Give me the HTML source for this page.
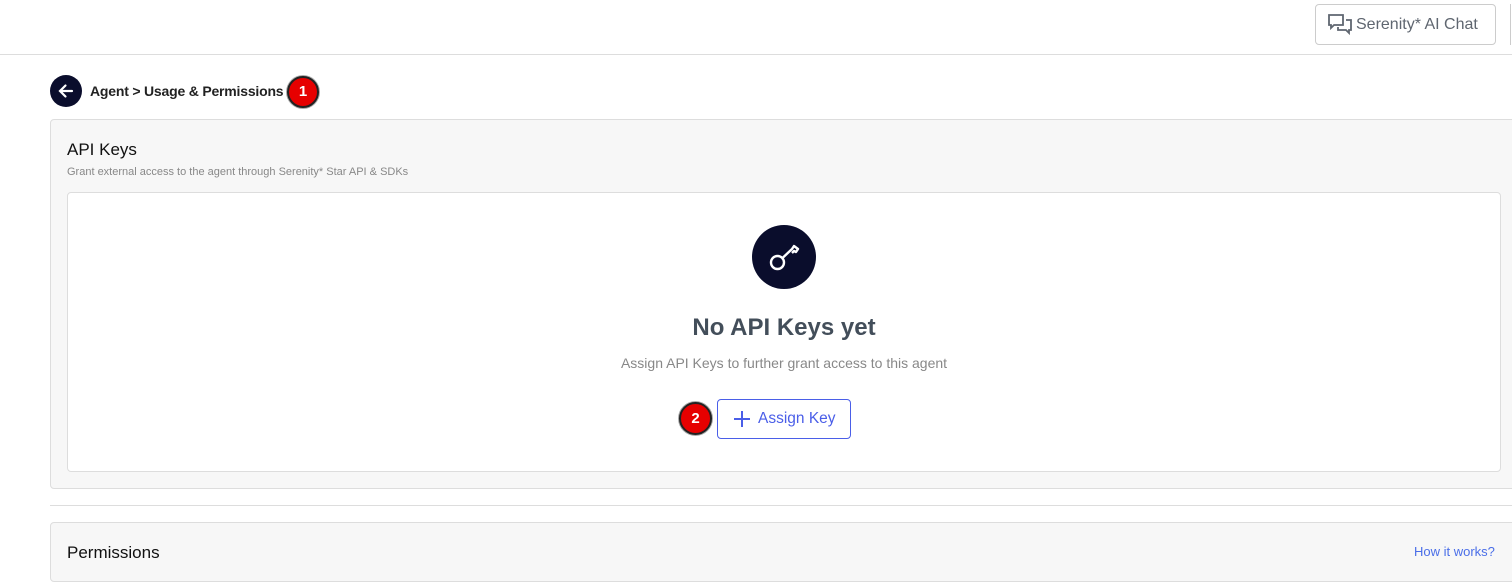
<!DOCTYPE html>
<html><head><style>
*{box-sizing:border-box;margin:0;padding:0}
body{width:1512px;height:572px;overflow:hidden;background:#fff;font-family:"Liberation Sans",sans-serif;position:relative}
.abs{position:absolute}
</style></head><body>
<div class="abs" style="left:0;top:54px;width:1512px;height:1px;background:#ddd"></div>
<div class="abs" style="left:1315px;top:4px;width:181px;height:41px;border:1px solid #ccc;border-radius:4px;color:#5f6670;font-size:16px;line-height:39px;padding-left:40px">Serenity* AI Chat</div>
<svg class="abs" style="left:1327px;top:13px" width="26" height="24" viewBox="0 0 26 24" fill="none" stroke="#5f6670" stroke-width="1.8"><path d="M2 2h14v10H7l-3 3v-3H2z"/><path d="M19 7h5v10h-2v3l-3-3h-8v-3"/></svg>
<div class="abs" style="left:1510px;top:4px;width:1px;height:41px;background:#ccc"></div>
<div class="abs" style="left:50px;top:75px;width:32px;height:32px;border-radius:50%;background:#0a0d2c"></div>
<svg class="abs" style="left:56px;top:81px" width="20" height="20" viewBox="0 0 20 20" fill="none" stroke="#fff" stroke-width="2.2" stroke-linecap="round"><path d="M16 10H4M9.5 4.5 4 10l5.5 5.5"/></svg>
<div class="abs" style="left:90px;top:83px;font-size:14px;font-weight:bold;color:#222;letter-spacing:-0.2px">Agent &gt; Usage &amp; Permissions</div>
<div class="abs" style="left:287px;top:76px;width:32px;height:32px;border-radius:50%;background:#e60000;border:2px solid #222;box-shadow:0 0 0 1px #aaa;color:#fff;font-weight:bold;font-size:15px;text-align:center;line-height:28px">1</div>
<div class="abs" style="left:50px;top:119px;width:1480px;height:370px;background:#f7f7f7;border:1px solid #ddd;border-radius:4px"></div>
<div class="abs" style="left:67px;top:140px;font-size:17px;color:#111">API Keys</div>
<div class="abs" style="left:67px;top:166px;font-size:11px;color:#888">Grant external access to the agent through Serenity* Star API &amp; SDKs</div>
<div class="abs" style="left:67px;top:192px;width:1434px;height:280px;background:#fff;border:1px solid #ddd;border-radius:4px"></div>
<div class="abs" style="left:752px;top:225px;width:64px;height:64px;border-radius:50%;background:#0a0d2c"></div>
<svg class="abs" style="left:752px;top:225px" width="64" height="64" viewBox="0 0 64 64" fill="none" stroke="#fff" stroke-width="2.4" stroke-linejoin="round"><circle cx="25.5" cy="37.5" r="6.5"/><path d="M30.5 33 40 24l2-3 4 3-2 3-2-1-2 2"/></svg>
<div class="abs" style="left:584px;top:314px;width:400px;text-align:center;font-size:24px;font-weight:bold;color:#434e5a">No API Keys yet</div>
<div class="abs" style="left:534px;top:355px;width:500px;text-align:center;font-size:14px;color:#888">Assign API Keys to further grant access to this agent</div>
<div class="abs" style="left:679px;top:402px;width:33px;height:33px;border-radius:50%;background:#e60000;border:2px solid #222;box-shadow:0 0 0 1px #aaa;color:#fff;font-weight:bold;font-size:15px;text-align:center;line-height:29px">2</div>
<div class="abs" style="left:717px;top:399px;width:134px;height:40px;border:1px solid #4a5ee8;border-radius:4px;color:#4a5ee8;font-size:15.5px;line-height:38px;padding-left:40px">Assign Key</div>
<svg class="abs" style="left:733px;top:410px" width="18" height="18" viewBox="0 0 18 18" stroke="#4a5ee8" stroke-width="2"><path d="M9 1v16M1 9h16"/></svg>
<div class="abs" style="left:50px;top:505px;width:1462px;height:1px;background:#ddd"></div>
<div class="abs" style="left:50px;top:522px;width:1480px;height:60px;background:#f7f7f7;border:1px solid #ddd;border-radius:4px"></div>
<div class="abs" style="left:67px;top:543px;font-size:17px;color:#111">Permissions</div>
<div class="abs" style="left:1414px;top:544px;font-size:13px;color:#4a6ee8">How it works?</div>
</body></html>
